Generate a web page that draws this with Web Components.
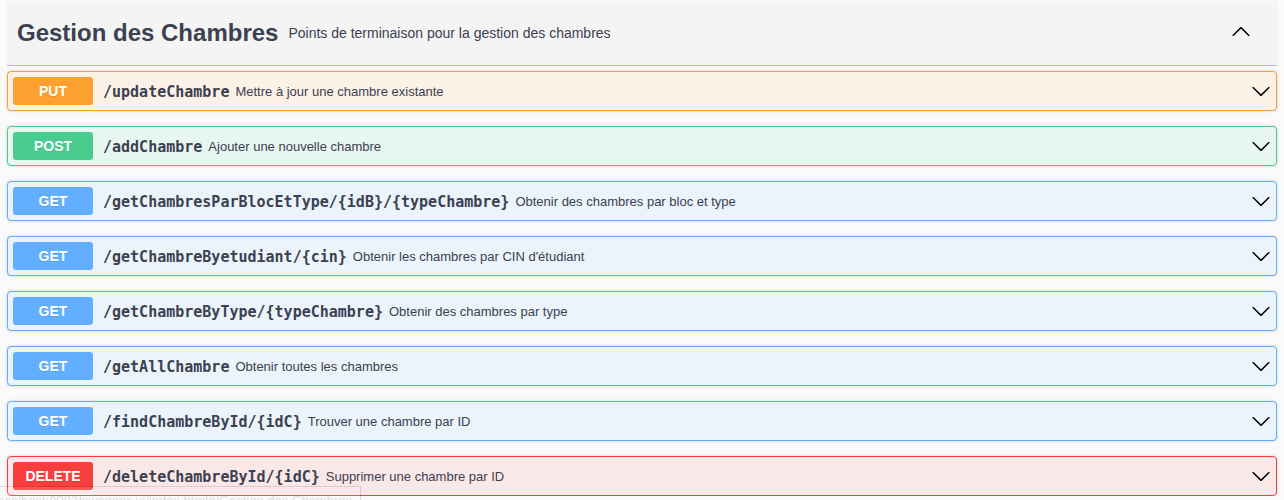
<!DOCTYPE html>
<html lang="fr">
<head>
<meta charset="utf-8">
<title>Gestion des Chambres</title>
<style>
html { height: 100%; overflow: hidden; }
body { margin: 0; background: #fafafa; color: #3b4151; font-family: "Liberation Sans", Arial, sans-serif; }
</style>
</head>
<body>
<api-section>
  <span slot="title">Gestion des Chambres</span>
  <span slot="note">Points de terminaison pour la gestion des chambres</span>
  <api-operation method="put" path="/updateChambre">Mettre à jour une chambre existante</api-operation>
  <api-operation method="post" path="/addChambre">Ajouter une nouvelle chambre</api-operation>
  <api-operation method="get" path="/getChambresParBlocEtType/{idB}/{typeChambre}">Obtenir des chambres par bloc et type</api-operation>
  <api-operation method="get" path="/getChambreByetudiant/{cin}">Obtenir les chambres par CIN d'étudiant</api-operation>
  <api-operation method="get" path="/getChambreByType/{typeChambre}">Obtenir des chambres par type</api-operation>
  <api-operation method="get" path="/getAllChambre">Obtenir toutes les chambres</api-operation>
  <api-operation method="get" path="/findChambreById/{idC}">Trouver une chambre par ID</api-operation>
  <api-operation method="delete" path="/deleteChambreById/{idC}">Supprimer une chambre par ID</api-operation>
</api-section>
<link-status>localhost:8083/swagger-ui/index.html#/Gestion des Chambres</link-status>

<script>
class ChevronIcon extends HTMLElement {
  constructor() {
    super();
    this.attachShadow({ mode: 'open' }).innerHTML = `
      <style>
        :host { display: block; width: 20px; height: 20px; flex: none; }
        svg { display: block; }
        .up, :host([up]) .down { display: none; }
        :host([up]) .up { display: inline; }
      </style>
      <svg width="20" height="20" viewBox="0 0 20 20" aria-hidden="true">
        <path class="down" d="M17.418 6.109c.272-.268.709-.268.979 0s.271.701 0 .969l-7.908 7.83c-.27.268-.707.268-.979 0l-7.908-7.83c-.27-.268-.27-.701 0-.969.271-.268.709-.268.979 0L10 13.25l7.418-7.141z"/>
        <path class="up" d="M17.418 14.908c.272.268.709.268.979 0s.271-.701 0-.969l-7.908-7.83c-.27-.268-.707-.268-.979 0l-7.908 7.83c-.27.268-.27.701 0 .969.271.268.709.268.979 0L10 7.767l7.418 7.141z"/>
      </svg>`;
  }
}

class ApiSection extends HTMLElement {
  constructor() {
    super();
    this.attachShadow({ mode: 'open' }).innerHTML = `
      <style>
        :host { display: block; padding: 1px 7px 0; }
        header { display: flex; align-items: center; gap: 10px; height: 64px;
          padding: 0 26px 0 10px; background: #f4f4f4; border-bottom: 1px solid #bbbcc0; }
        h2 { margin: 0; font-size: 24px; line-height: 28px; white-space: nowrap; }
        p { margin: 0; flex: 1; font-size: 14px; line-height: 20px; }
        button { display: block; padding: 0 0 4px; border: 0; background: none; cursor: pointer; }
        .list { display: flex; flex-direction: column; gap: 15px; padding-top: 5px; }
      </style>
      <section>
        <header>
          <h2><slot name="title"></slot></h2>
          <p><slot name="note"></slot></p>
          <button type="button" aria-label="Replier la section" aria-expanded="true"><chevron-icon up></chevron-icon></button>
        </header>
        <div class="list"><slot></slot></div>
      </section>`;
  }
}

class ApiOperation extends HTMLElement {
  connectedCallback() {
    if (this.shadowRoot) return;
    const root = this.attachShadow({ mode: 'open' });
    root.innerHTML = `
      <style>
        :host { --c: #61affe; --bg: #ebf3fb; display: block; }
        :host([method="put"]) { --c: #fca130; --bg: #fbf1e6; }
        :host([method="post"]) { --c: #49cc90; --bg: #e8f6f0; }
        :host([method="delete"]) { --c: #f93e3e; --bg: #fae7e7; }
        button { display: flex; align-items: center; box-sizing: border-box; width: 100%; height: 40px;
          margin: 0; padding: 5px; border: 1px solid var(--c); border-radius: 4px; background: var(--bg);
          box-shadow: 0 0 3px rgba(0,0,0,.19); color: inherit; font: inherit; text-align: left; cursor: pointer; }
        .method { flex: none; width: 80px; border-radius: 3px; background: var(--c); color: #fff;
          font-size: 14px; font-weight: 700; line-height: 28px; text-align: center; text-shadow: 0 1px 0 rgba(0,0,0,.1); }
        .text { flex: 1; display: flex; align-items: center; gap: 6px; padding: 2px 0 0 10px; }
        .path { font: 700 15px/20px "DejaVu Sans Mono", monospace; white-space: nowrap; }
        .summary { font-size: 13px; line-height: 20px; }
      </style>
      <button type="button" aria-expanded="false">
        <span class="method"></span>
        <span class="text"><span class="path"></span><span class="summary"><slot></slot></span></span>
        <chevron-icon></chevron-icon>
      </button>`;
    root.querySelector('.method').textContent = this.getAttribute('method').toUpperCase();
    root.querySelector('.path').textContent = this.getAttribute('path');
  }
}

class LinkStatus extends HTMLElement {
  constructor() {
    super();
    this.attachShadow({ mode: 'open' }).innerHTML = `
      <style>
        :host { position: fixed; left: 0; bottom: -8px; box-sizing: border-box; width: 361px; height: 22px;
          display: flex; justify-content: flex-end; padding-right: 8px; border: 1px solid #000; border-left: 0;
          background: #fff; opacity: .12; color: #000; font-size: 13px; line-height: 28px; white-space: nowrap; pointer-events: none; }
      </style>
      <slot></slot>`;
  }
}

customElements.define('chevron-icon', ChevronIcon);
customElements.define('api-section', ApiSection);
customElements.define('api-operation', ApiOperation);
customElements.define('link-status', LinkStatus);
</script>
</body>
</html>
